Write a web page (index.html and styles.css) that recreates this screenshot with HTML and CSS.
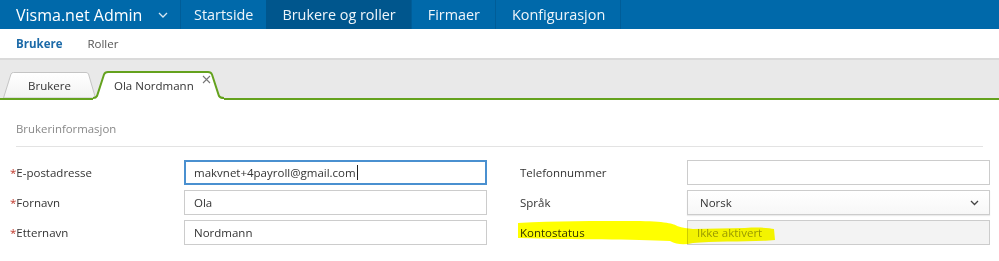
FILE: index.html
```html
<!DOCTYPE html>
<html lang="no">
<head>
    <meta charset="UTF-8">
    <title>Visma.net Admin - Brukere</title>
    <link rel="stylesheet" href="styles.css">
</head>
<body>
    <div class="page">
        <nav class="topnav">
            <div class="topnav__brand">
                <span>Visma.net Admin</span>
                <svg class="topnav__chevron" width="10" height="6" viewBox="0 0 10 6"><path d="M1 1l4 4 4-4" fill="none" stroke="#d6e6f2" stroke-width="1.3"/></svg>
            </div>
            <a class="topnav__item topnav__item--first">Startside</a>
            <a class="topnav__item topnav__item--active">Brukere og roller</a>
            <a class="topnav__item">Firmaer</a>
            <a class="topnav__item">Konfigurasjon</a>
        </nav>

        <div class="subnav">
            <a class="subnav__item subnav__item--active">Brukere</a>
            <a class="subnav__item">Roller</a>
        </div>

        <div class="tabs">
            <div class="tab">
                <svg class="tab__shape" width="93" height="26" viewBox="0 0 93 26">
                    <defs>
                        <linearGradient id="tabbg" x1="0" y1="0" x2="0" y2="1">
                            <stop offset="0" stop-color="#ffffff"/>
                            <stop offset="1" stop-color="#f3f3f3"/>
                        </linearGradient>
                    </defs>
                    <path d="M0.5 26 L8 2 Q8.7 0.5 10.5 0.5 L83 0.5 Q84.8 0.5 85.5 2 L92.5 26 Z" fill="url(#tabbg)" stroke="#c4c4c4"/>
                </svg>
                <span class="tab__label">Brukere</span>
            </div>
            <div class="tab tab--active">
                <svg class="tab__shape" width="131" height="29" viewBox="0 0 131 29">
                    <path d="M0 29 L0 27 Q3 27 4 25 L11 3.5 Q12 1 15 1 L115 1 Q118 1 119 3.5 L126 25 Q127 27 131 27 L131 29 Z" fill="#ffffff"/>
                    <path d="M0 27 Q3 27 4 25 L11 3.5 Q12 1 15 1 L115 1 Q118 1 119 3.5 L126 25 Q127 27 131 27" fill="none" stroke="#64a21e" stroke-width="2"/>
                </svg>
                <span class="tab__label">Ola Nordmann</span>
                <svg class="tab__close" width="9" height="9" viewBox="0 0 9 9"><path d="M1 1l7 7M8 1l-7 7" stroke="#777" stroke-width="1.1"/></svg>
            </div>
        </div>

        <div class="section">
            <div class="section__title">Brukerinformasjon</div>
        </div>

        <div class="form">
            <div class="form__col">
                <label class="field__label"><span class="req">*</span>E-postadresse</label>
                <div class="field__input field__input--focus">makvnet+4payroll@gmail.com<span class="caret"></span></div>
                <label class="field__label"><span class="req">*</span>Fornavn</label>
                <div class="field__input">Ola</div>
                <label class="field__label"><span class="req">*</span>Etternavn</label>
                <div class="field__input">Nordmann</div>
            </div>
            <div class="form__col form__col--right">
                <label class="field__label">Telefonnummer</label>
                <div class="field__input"></div>
                <label class="field__label">Språk</label>
                <div class="field__input field__select">
                    <span>Norsk</span>
                    <svg width="9" height="6" viewBox="0 0 9 6"><path d="M1 1l3.5 3.5L8 1" fill="none" stroke="#444" stroke-width="1.3"/></svg>
                </div>
                <label class="field__label">Kontostatus</label>
                <div class="field__input field__input--disabled">Ikke aktivert</div>
            </div>
        </div>

        <svg class="marker" width="265" height="32" viewBox="0 0 265 32">
            <path d="M3 5 C40 3 80 3 120 3 C150 3 160 6 162 8 C168 10 172 10 178 11 L230 10 C245 9 255 10 259 11 L260 22 C240 24 200 23 178 25 C170 27 162 27 155 23 C120 21 60 22 3 20 Z" fill="#ffff00"/>
        </svg>
    </div>
</body>
</html>
```

FILE: styles.css
```css
* {
    margin: 0;
    padding: 0;
    box-sizing: border-box;
}

:root {
    --blue: #0069aa;
    --blue-dark: #00568d;
    --line: #cccccc;
    --green: #64a21e;
}

body {
    font-family: "Open Sans", "Liberation Sans", sans-serif;
    font-size: 11.5px;
    color: #333;
    background: #fff;
}

.page {
    position: relative;
    width: 999px;
    height: 261px;
    overflow: hidden;
}

/* top navigation */
.topnav {
    display: flex;
    height: 29px;
    background: var(--blue);
    color: #fff;
    font-size: 14.4px;
}

.topnav__brand {
    display: flex;
    align-items: center;
    width: 181px;
    padding-left: 16px;
    font-size: 16px;
    border-right: 1px solid #005d98;
}

.topnav__chevron {
    margin-left: 16px;
}

.topnav__item {
    display: flex;
    align-items: center;
    padding: 0 15px 0 16px;
    border-right: 1px solid #005d98;
    color: #eef5fa;
}

.topnav__item--first {
    padding: 0 13px 0 13px;
    border-right: none;
}

.topnav__item--active {
    background: var(--blue-dark);
}

/* sub navigation */
.subnav {
    display: flex;
    align-items: center;
    height: 29px;
    padding-left: 16px;
    gap: 25px;
}

.subnav__item {
    color: #555;
}

.subnav__item--active {
    color: #1c6aa8;
    font-weight: 700;
}

/* tabs */
.tabs {
    display: flex;
    align-items: flex-end;
    height: 42px;
    padding-left: 3px;
    background: #e9e9e9;
    border-top: 2px solid #dadada;
    border-bottom: 2px solid var(--green);
}

.tab {
    position: relative;
    display: flex;
    align-items: center;
    justify-content: center;
    width: 93px;
    height: 26px;
}

.tab__shape {
    position: absolute;
    left: 0;
    top: 0;
}

.tab__label {
    position: relative;
    padding-top: 1px;
    color: #333;
}

.tab--active {
    justify-content: flex-start;
    width: 131px;
    height: 29px;
    margin-left: -3px;
    margin-bottom: -2px;
    padding: 0 0 2px 21px;
}

.tab__close {
    position: absolute;
    left: 109px;
    top: 4px;
}

/* section */
.section {
    padding: 21px 16px 0;
}

.section__title {
    color: #888;
    font-size: 11.4px;
    padding-bottom: 10px;
    border-bottom: 1px solid #e3e3e3;
}

/* form */
.form {
    display: flex;
    padding: 13px 0 0 10px;
}

.form__col {
    display: grid;
    grid-template-columns: 174px 303px;
    row-gap: 5px;
    align-items: center;
}

.form__col--right {
    grid-template-columns: 167px 303px;
    margin-left: 33px;
}

.field__label {
    color: #333;
}

.req {
    color: #c0392b;
}

.field__input {
    display: flex;
    align-items: center;
    height: 25px;
    padding: 0 9px;
    border: 1px solid var(--line);
    color: #333;
}

.field__input--focus {
    border: 2px solid #4a90d0;
    padding: 0 8px;
}

.caret {
    display: inline-block;
    width: 1px;
    height: 15px;
    margin-left: 1px;
    background: #222;
}

.field__select {
    justify-content: space-between;
    padding: 0 10px 0 12px;
    background: linear-gradient(#ffffff, #f7f7f7);
    box-shadow: 0 1px 1px rgba(0, 0, 0, 0.08);
}

.field__input--disabled {
    background: #f3f3f3;
    color: #999;
}

.marker {
    position: absolute;
    left: 515px;
    top: 218px;
    mix-blend-mode: multiply;
}
```
